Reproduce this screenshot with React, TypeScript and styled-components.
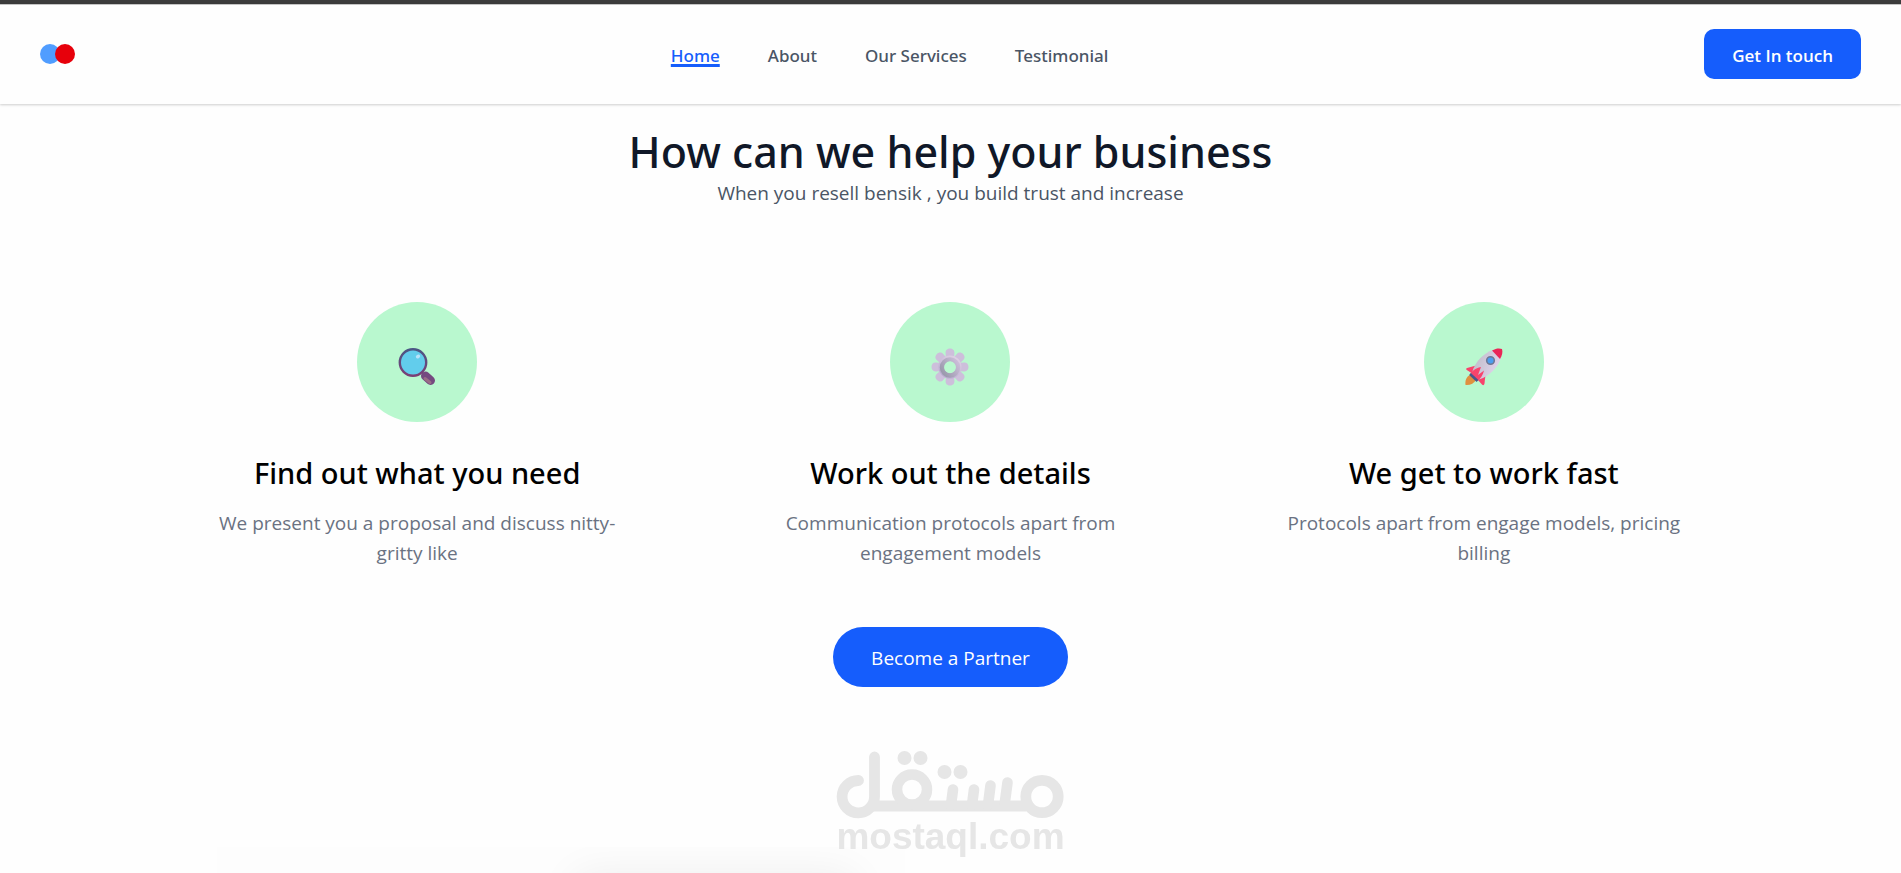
import React from "react";
import styled, { createGlobalStyle } from "styled-components";

const GlobalStyle = createGlobalStyle`
  *, *::before, *::after { box-sizing: border-box; }
  body {
    margin: 0;
    background: #fefefe;
    color: #000;
    font-family: "Open Sans", "Noto Sans", sans-serif;
  }
  h1, h2, p, ul { margin: 0; padding: 0; }
`;

const headingFont = `"Noto Sans", "Open Sans", sans-serif`;

const Page = styled.div`
  display: flex;
  flex-direction: column;
  min-height: 100vh;
  border-top: 4px solid #3c3c3c;
`;

const Header = styled.header`
  display: flex;
  align-items: center;
  justify-content: space-between;
  height: 100px;
  padding: 0 40px 1px;
  border-top: 1px solid #c4c4c4;
  background: #fefefe;
  box-shadow: 0 1px 3px rgba(0, 0, 0, 0.1), 0 1px 2px rgba(0, 0, 0, 0.1);
`;

const Logo = styled.a`
  display: block;
  width: 35px;
  height: 20px;
`;

const NavList = styled.ul`
  display: flex;
  gap: 48px;
  && { padding-top: 3px; }
  list-style: none;
`;

const NavLink = styled.a<{ $active?: boolean }>`
  color: ${(p) => (p.$active ? "#155dfc" : "#4a5565")};
  font-family: ${headingFont};
  font-size: 17px;
  font-weight: 500;
  line-height: 28px;
  text-decoration: ${(p) => (p.$active ? "underline 3px" : "none")};
  text-underline-offset: 2px;
  text-decoration-skip-ink: none;
`;

const Button = styled.button<{ $pill?: boolean }>`
  height: ${(p) => (p.$pill ? 60 : 50)}px;
  padding: 2px ${(p) => (p.$pill ? 38 : 28)}px 0;
  border: 0;
  border-radius: ${(p) => (p.$pill ? 30 : 10)}px;
  background: #155dfc;
  color: #fff;
  font-family: inherit;
  font-size: ${(p) => (p.$pill ? 19 : 17)}px;
  font-weight: ${(p) => (p.$pill ? 400 : 600)};
  cursor: pointer;
`;

const Main = styled.main`
  display: flex;
  flex: 1;
  flex-direction: column;
  align-items: center;
  padding-top: 21px;
`;

const Title = styled.h1`
  color: #101828;
  font-family: ${headingFont};
  font-size: 43px;
  font-weight: 500;
  line-height: 53px;
  text-align: center;
`;

const Subtitle = styled.p`
  color: #4a5565;
  font-size: 19px;
  line-height: 30px;
  text-align: center;
`;

const Steps = styled.section`
  display: grid;
  grid-template-columns: repeat(3, 1fr);
  gap: 64px;
  width: 100%;
  max-width: 1536px;
  padding-top: 94px;
`;

const Step = styled.article`
  display: flex;
  flex-direction: column;
  align-items: center;
  padding: 0 32px;
  text-align: center;
`;

const Badge = styled.div`
  display: flex;
  align-items: center;
  justify-content: center;
  width: 120px;
  height: 120px;
  padding-top: 10px;
  border-radius: 50%;
  background: #b9f8cf;
`;

const StepTitle = styled.h2`
  margin-top: 31px;
  font-family: ${headingFont};
  font-size: 29px;
  font-weight: 500;
  line-height: 40px;
`;

const StepText = styled.p`
  margin-top: 15px;
  color: #6a7282;
  font-size: 19px;
  line-height: 30px;
`;

const Action = styled.div`
  padding: 59px 0 160px;
`;

const NextSection = styled.section`
  display: grid;
  flex: 1;
  grid-template-columns: 15fr 17fr;
  width: 100%;
  max-width: 1536px;
  min-height: 26px;
  padding: 0 34px;
`;

const Panel = styled.div`
  display: flex;
  align-items: flex-start;
  justify-content: flex-end;
  padding: 26px 48px 0;
  overflow: hidden;
  background: #fdfdfd;
`;

const PanelCard = styled.div`
  width: 48%;
  height: 80px;
  margin-bottom: -80px;
  border-radius: 16px;
  background: #fff;
  box-shadow: 0 0 40px rgba(0, 0, 0, 0.06);
`;

const Watermark = styled.div`
  position: fixed;
  right: 0;
  bottom: 19px;
  left: 0;
  display: flex;
  flex-direction: column;
  align-items: center;
  color: #e6e6e6;
  pointer-events: none;
`;

const WatermarkText = styled.span`
  font-family: "Liberation Sans", sans-serif;
  font-size: 37px;
  font-weight: 700;
  line-height: 35px;
`;

const MagnifierIcon = () => (
  <svg width="38" height="38" viewBox="0 0 38 38" aria-label="Search" role="img">
    <defs>
      <linearGradient id="ring" x1="0" y1="0" x2="0" y2="1">
        <stop offset="0" stopColor="#4b5684" />
        <stop offset="1" stopColor="#7b3f76" />
      </linearGradient>
    </defs>
    <path d="M27.500 28L32.500 32.500" stroke="#754a80" strokeWidth="9" strokeLinecap="round" />
    <path d="M27 30.500L32 34.500" stroke="#9a6d86" strokeWidth="3" strokeLinecap="round" />
    <circle cx="15" cy="14.500" r="13.200" fill="#62cdec" stroke="url(#ring)" strokeWidth="2.400" />
    <ellipse cx="20" cy="8.500" rx="2.300" ry="1.800" fill="#b9e3fa" transform="rotate(-35 20 8.500)" />
  </svg>
);

const GearIcon = () => (
  <svg width="38" height="38" viewBox="0 0 38 38" aria-label="Settings" role="img">
    <defs>
      <linearGradient id="gear" x1="0.8" y1="0" x2="0.2" y2="1">
        <stop offset="0" stopColor="#dccfe3" />
        <stop offset="1" stopColor="#b9abd0" />
      </linearGradient>
      <linearGradient id="hub" x1="1" y1="0" x2="0" y2="0.7">
        <stop offset="0" stopColor="#cfc0dc" />
        <stop offset="1" stopColor="#9c9aae" />
      </linearGradient>
    </defs>
    <g fill="#cdbfdb">
      {[0, 45, 90, 135, 180, 225, 270, 315].map((angle) => (
        <path
          key={angle}
          d="M15 12L14.600 5C14.400 2 16.500 0.500 19 0.500S23.600 2 23.400 5L23 12Z"
          transform={`rotate(${angle} 19 19)`}
        />
      ))}
    </g>
    <circle cx="19" cy="19" r="9" fill="none" stroke="url(#gear)" strokeWidth="5" />
    <circle cx="19" cy="19.500" r="8" fill="none" stroke="url(#hub)" strokeWidth="4.500" />
    <circle cx="19" cy="19" r="5.700" fill="#b9f8cf" />
  </svg>
);

const RocketIcon = () => (
  <svg width="38" height="38" viewBox="0 0 38 38" aria-label="Rocket" role="img">
    <defs>
      <linearGradient id="body" x1="0" y1="0.3" x2="1" y2="0.7">
        <stop offset="0" stopColor="#bfbcc8" />
        <stop offset="1" stopColor="#e4d6ef" />
      </linearGradient>
    </defs>
    <path d="M5 27C1 29 0 33 0.500 37C5 37.500 9 35.500 11 32Z" fill="#e0903f" />
    <path d="M11 17.500L2 20C0.800 20.500 1 21.500 1.800 22L8 26Z" fill="#f8436c" />
    <path d="M20.500 26.500L19.500 35.500C19 37.500 18 37.500 17 36.500L12 31Z" fill="#f8436c" />
    <path d="M28 2C19 5 10.500 13 7 24.500L14 31.500C25 28 33 19 36 10Z" fill="url(#body)" />
    <path d="M27 2.500C31 0 35 0 37 1C38 4 37 8 35 11Z" fill="#ea2557" />
    <path d="M16 19C10 20.500 7 23 5 26.500L12 33C15.500 31 18 27 19 22.500L13 27Z" fill="#f8436c" />
    <path d="M5 26L12.500 33" stroke="#46578d" strokeWidth="2.600" />
    <circle cx="25.500" cy="12.500" r="3.800" fill="#4c9df0" stroke="#6e7894" strokeWidth="1.600" />
  </svg>
);

const MostaqlMark = () => (
  <svg width="229" height="68" viewBox="0 0 229 68" fill="none" stroke="currentColor" strokeLinecap="round" aria-hidden="true">
    <path d="M22.500 29.500A16.200 16.200 0 1 0 38.500 45.500V6" strokeWidth="10.800" />
    <path d="M38 55H190" strokeWidth="11" strokeLinecap="butt" />
    <circle cx="76" cy="38.500" r="15" strokeWidth="10.500" />
    <circle cx="206" cy="45.500" r="16.200" strokeWidth="10.800" />
    <path d="M117 38.500L115 54M138 38.500L136 54M154.500 34.500L152 54M171.500 31.500L168.500 54" strokeWidth="10.600" />
    <g fill="currentColor" stroke="none">
      <circle cx="68.500" cy="7" r="7" />
      <circle cx="84.500" cy="7" r="7" />
      <circle cx="108.500" cy="21" r="7" />
      <circle cx="124.500" cy="21" r="7" />
    </g>
  </svg>
);

const links = ["Home", "About", "Our Services", "Testimonial"];

const steps = [
  { icon: <MagnifierIcon />, title: "Find out what you need", text: "We present you a proposal and discuss nitty-gritty like" },
  { icon: <GearIcon />, title: "Work out the details", text: "Communication protocols apart from engagement models" },
  { icon: <RocketIcon />, title: "We get to work fast", text: "Protocols apart from engage models, pricing billing" },
];

export default function App() {
  return (
    <Page>
      <GlobalStyle />
      <Header>
        <Logo href="#" aria-label="Homepage">
          <svg width="35" height="20" viewBox="0 0 35 20">
            <circle cx="10" cy="10" r="10" fill="#509dff" />
            <circle cx="25" cy="10" r="10" fill="#e7000b" />
          </svg>
        </Logo>
        <nav>
          <NavList>
            {links.map((label, i) => (
              <li key={label}>
                <NavLink href="#" $active={i === 0}>{label}</NavLink>
              </li>
            ))}
          </NavList>
        </nav>
        <Button type="button">Get In touch</Button>
      </Header>
      <Main>
        <Title>How can we help your business</Title>
        <Subtitle>When you resell bensik , you build trust and increase</Subtitle>
        <Steps>
          {steps.map((s) => (
            <Step key={s.title}>
              <Badge>{s.icon}</Badge>
              <StepTitle>{s.title}</StepTitle>
              <StepText>{s.text}</StepText>
            </Step>
          ))}
        </Steps>
        <Action>
          <Button type="button" $pill>Become a Partner</Button>
        </Action>
        <NextSection>
          <Panel>
            <PanelCard />
          </Panel>
        </NextSection>
      </Main>
      <Watermark>
        <MostaqlMark />
        <WatermarkText>mostaql.com</WatermarkText>
      </Watermark>
    </Page>
  );
}
